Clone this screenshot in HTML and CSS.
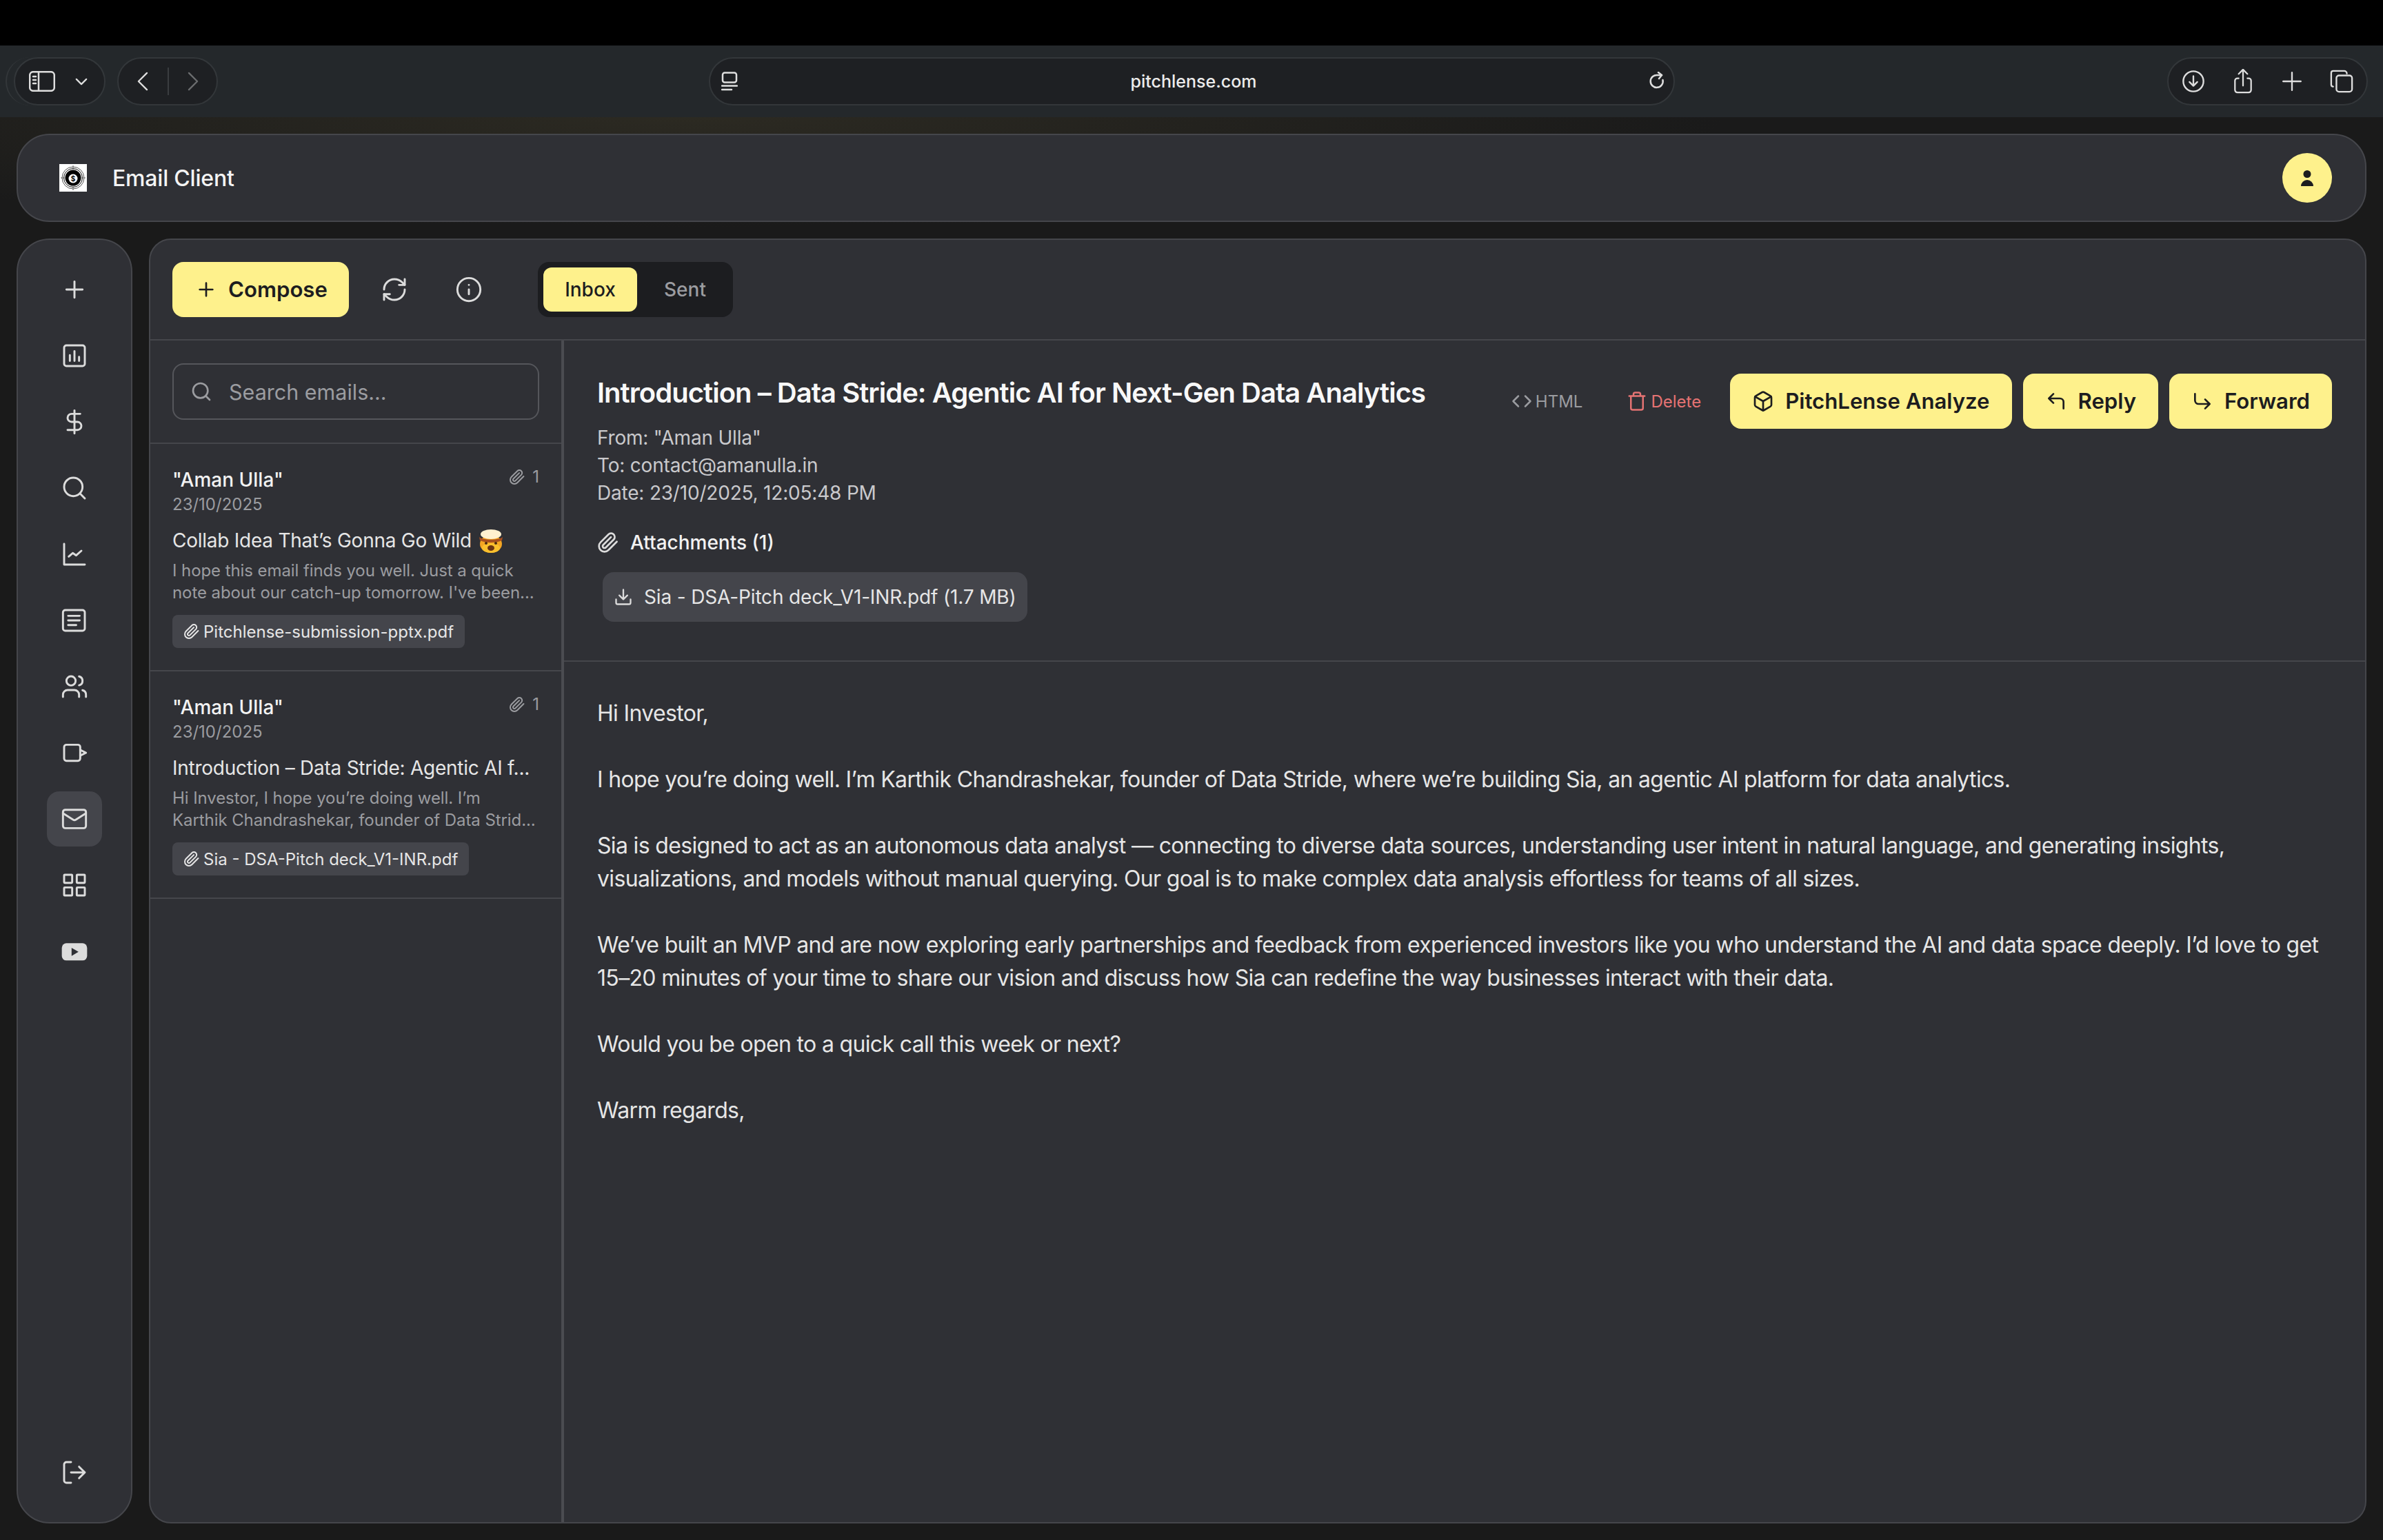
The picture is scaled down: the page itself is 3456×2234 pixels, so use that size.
FILE: index.html
```html
<!DOCTYPE html>
<html lang="en">

<head>
  <meta charset="utf-8">
  <title>Email Client</title>
  <link rel="stylesheet" href="styles.css">
</head>

<body>
  <div class="bezel"></div>

  <div class="chrome">
    <div class="pill pill-side">
      <svg class="ic-side" viewBox="0 0 38 30"><rect x="1.2" y="1.2" width="35.600" height="27.600" rx="5"/><path d="M14 1.500v27M6 8h4M6 13h4M6 18h4"/></svg>
      <svg class="ic-chev" viewBox="0 0 20 12"><path d="M2 2l8 8 8-8"/></svg>
    </div>
    <div class="pill pill-nav">
      <svg class="ic-arrow" viewBox="0 0 18 30"><path d="M16 2L3 15l13 13"/></svg>
      <span class="nav-sep"></span>
      <svg class="ic-arrow dim" viewBox="0 0 18 30"><path d="M2 2l13 13L2 28"/></svg>
    </div>
    <div class="pill pill-url">
      <svg class="ic-page" viewBox="0 0 24 28"><rect x="2" y="1.500" width="20" height="14" rx="3"/><path d="M1 20.500h22M1 26h14"/></svg>
      <span class="url">pitchlense.com</span>
      <svg class="ic-reload" viewBox="0 0 24 28"><path d="M19.500 12a9 9 0 1 1-7.500-7h6"/><path d="M13 1l5 4-4 5"/></svg>
    </div>
    <div class="pill pill-tools">
      <svg class="ic-tool" viewBox="0 0 36 36"><circle cx="18" cy="18" r="15.500"/><path d="M18 10v15M12 19l6 6 6-6"/></svg>
      <svg class="ic-tool" viewBox="0 0 36 40"><path d="M11 15H9a4 4 0 0 0-4 4v15a4 4 0 0 0 4 4h18a4 4 0 0 0 4-4V19a4 4 0 0 0-4-4h-2"/><path d="M18 27V2M11 8l7-7 7 7"/></svg>
      <svg class="ic-tool" viewBox="0 0 36 36"><path d="M4.500 18h27M18 4.500v27"/></svg>
      <svg class="ic-tool" viewBox="0 0 36 36"><path d="M5 26a3 3 0 0 1-3-3V5a3 3 0 0 1 3-3h17a4 4 0 0 1 4 4"/><rect x="10" y="9" width="24" height="25" rx="4"/></svg>
    </div>
  </div>

  <div class="app">
    <header class="topbar">
      <div class="brand">
        <svg class="logo" viewBox="0 0 40 40">
          <rect width="40" height="40" fill="#fff"/>
          <circle cx="20" cy="20" r="16" fill="none" stroke="#555" stroke-width="1"/>
          <circle cx="20" cy="20" r="13.500" fill="none" stroke="#111" stroke-width="1"/>
          <circle cx="20" cy="20" r="11.500" fill="#000"/>
          <circle cx="20" cy="21" r="6.500" fill="#fff"/>
          <path d="M20 2v6M20 32v6M2 20h6M32 20h6" stroke="#666" stroke-width="1"/>
          <text x="20" y="25" class="logo-sign">$</text>
        </svg>
        <span class="brand-name">Email Client</span>
      </div>
      <div class="avatar">
        <svg viewBox="0 0 24 24"><circle cx="12" cy="6.500" r="5.500"/><path d="M3 24a9 9 0 0 1 18 0z"/></svg>
      </div>
    </header>

    <div class="workspace">
      <aside class="sidebar">
        <nav class="side-nav">
          <a class="side-link"><svg class="ico" viewBox="0 0 24 24"><path d="M5 12h14M12 5v14"/></svg></a>
          <a class="side-link"><svg class="ico" viewBox="0 0 24 24"><rect x="3" y="3" width="18" height="18" rx="2"/><path d="M8 16.500v-5M12 16.500V8M16 16.500v-3.500"/></svg></a>
          <a class="side-link"><svg class="ico" viewBox="0 0 24 24"><path d="M12 2v20M17 5H9.500a3.500 3.500 0 0 0 0 7h5a3.500 3.500 0 0 1 0 7H6"/></svg></a>
          <a class="side-link"><svg class="ico" viewBox="0 0 24 24"><circle cx="11" cy="11" r="8"/><path d="M21 21l-4.300-4.300"/></svg></a>
          <a class="side-link"><svg class="ico" viewBox="0 0 24 24"><path d="M3 3v18h18"/><path d="M7 14l3.500-3 3 2 4.500-4"/></svg></a>
          <a class="side-link"><svg class="ico" viewBox="0 0 24 24"><rect x="2" y="3" width="19" height="18" rx="2"/><path d="M6.500 8h10M6.500 12h10M6.500 16h7"/></svg></a>
          <a class="side-link"><svg class="ico" viewBox="0 0 24 24"><path d="M16 21v-2a4 4 0 0 0-4-4H6a4 4 0 0 0-4 4v2"/><circle cx="9" cy="7" r="4"/><path d="M22 21v-2a4 4 0 0 0-3-3.870M16 3.130a4 4 0 0 1 0 7.750"/></svg></a>
          <a class="side-link"><svg class="ico" viewBox="0 0 24 24"><rect x="3" y="5" width="14" height="14" rx="2"/><path d="M17 9.500l5 2.500-5 2.500"/></svg></a>
          <a class="side-link active"><svg class="ico" viewBox="0 0 24 24"><rect x="2" y="4" width="20" height="16" rx="2"/><path d="M22 7l-8.970 5.700a1.940 1.940 0 0 1-2.060 0L2 7"/></svg></a>
          <a class="side-link"><svg class="ico" viewBox="0 0 24 24"><rect x="3" y="3" width="7" height="7" rx="0.500"/><rect x="14" y="3" width="7" height="7" rx="0.500"/><rect x="14" y="14" width="7" height="7" rx="0.500"/><rect x="3" y="14" width="7" height="7" rx="0.500"/></svg></a>
          <a class="side-link"><svg class="ico" viewBox="0 0 24 24"><rect class="solid" x="1" y="5" width="22" height="15" rx="4"/><path class="cut" d="M9.500 9l6 3.500-6 3.500z"/></svg></a>
        </nav>
        <a class="side-link"><svg class="ico" viewBox="0 0 24 24"><path d="M9 21H5a2 2 0 0 1-2-2V5a2 2 0 0 1 2-2h4"/><path d="M16 17l5-5-5-5M21 12H9"/></svg></a>
      </aside>

      <main class="mail">
        <div class="mail-toolbar">
          <button class="btn btn-compose"><svg class="ico ico-sm" viewBox="0 0 24 24"><path d="M5 12h14M12 5v14"/></svg>Compose</button>
          <span class="tool-ico tool-first"><svg class="ico" viewBox="0 0 24 24"><path d="M3 12a9 9 0 0 1 9-9 9.750 9.750 0 0 1 6.740 2.740L21 8"/><path d="M21 3v5h-5"/><path d="M21 12a9 9 0 0 1-9 9 9.750 9.750 0 0 1-6.740-2.740L3 16"/><path d="M8 16H3v5"/></svg></span>
          <span class="tool-ico"><svg class="ico" viewBox="0 0 24 24"><circle cx="12" cy="12" r="10"/><path d="M12 16v-4M12 8h.01"/></svg></span>
          <div class="tabs">
            <span class="tab on">Inbox</span>
            <span class="tab tab-sent">Sent</span>
          </div>
        </div>

        <div class="mail-body">
          <section class="list">
            <div class="search-wrap">
              <label class="search">
                <svg class="ico ico-search" viewBox="0 0 24 24"><circle cx="11" cy="11" r="8"/><path d="M21 21l-4.300-4.300"/></svg>
                <input class="search-input" type="text" placeholder="Search emails...">
              </label>
            </div>

            <article class="item">
              <div class="item-top">
                <div>
                  <div class="item-from">"Aman Ulla"</div>
                  <div class="item-date">23/10/2025</div>
                </div>
                <span class="item-count"><svg class="clip" viewBox="0 0 24 24"><path d="M21.440 11.050l-9.190 9.190a6 6 0 0 1-8.490-8.490l8.570-8.570A4 4 0 1 1 18 8.840l-8.590 8.570a2 2 0 0 1-2.830-2.830l8.490-8.480"/></svg>1</span>
              </div>
              <div class="item-subject">Collab Idea That’s Gonna Go Wild
                <svg class="emoji" viewBox="0 0 36 36">
                  <ellipse cx="18" cy="23" rx="16" ry="13" fill="#f5a623"/>
                  <ellipse cx="18" cy="29" rx="13" ry="7" fill="#fbc02d"/>
                  <ellipse cx="18" cy="9" rx="15" ry="7" fill="#fff0cf"/>
                  <path d="M1 13c6 5 28 5 34 0l-1 5c-8 4-24 4-32 0z" fill="#a9501f"/>
                  <circle cx="11" cy="22" r="2" fill="#4a2a12"/>
                  <circle cx="25" cy="22" r="2" fill="#4a2a12"/>
                  <ellipse cx="18" cy="29" rx="5" ry="4" fill="#6b3412"/>
                </svg>
              </div>
              <p class="item-preview">I hope this email finds you well. Just a quick note about our catch-up tomorrow. I've been...</p>
              <span class="chip"><svg class="clip" viewBox="0 0 24 24"><path d="M21.440 11.050l-9.190 9.190a6 6 0 0 1-8.490-8.490l8.570-8.570A4 4 0 1 1 18 8.840l-8.590 8.570a2 2 0 0 1-2.830-2.830l8.490-8.480"/></svg>Pitchlense-submission-pptx.pdf</span>
            </article>

            <article class="item">
              <div class="item-top">
                <div>
                  <div class="item-from">"Aman Ulla"</div>
                  <div class="item-date">23/10/2025</div>
                </div>
                <span class="item-count"><svg class="clip" viewBox="0 0 24 24"><path d="M21.440 11.050l-9.190 9.190a6 6 0 0 1-8.490-8.490l8.570-8.570A4 4 0 1 1 18 8.840l-8.590 8.570a2 2 0 0 1-2.830-2.830l8.490-8.480"/></svg>1</span>
              </div>
              <div class="item-subject">Introduction – Data Stride: Agentic AI f...</div>
              <p class="item-preview">Hi Investor, I hope you’re doing well. I’m Karthik Chandrashekar, founder of Data Strid...</p>
              <span class="chip"><svg class="clip" viewBox="0 0 24 24"><path d="M21.440 11.050l-9.190 9.190a6 6 0 0 1-8.490-8.490l8.570-8.570A4 4 0 1 1 18 8.840l-8.590 8.570a2 2 0 0 1-2.830-2.830l8.490-8.480"/></svg>Sia - DSA-Pitch deck_V1-INR.pdf</span>
            </article>
          </section>

          <section class="detail">
            <div class="detail-head">
              <div class="head-left">
                <h1 class="detail-title">Introduction – Data Stride: Agentic AI for Next-Gen Data Analytics</h1>
                <div class="meta">
                  <div>From: "Aman Ulla"</div>
                  <div>To: contact@amanulla.in</div>
                  <div>Date: 23/10/2025, 12:05:48 PM</div>
                </div>
                <div class="attach-title"><svg class="ico ico-sm" viewBox="0 0 24 24"><path d="M21.440 11.050l-9.190 9.190a6 6 0 0 1-8.490-8.490l8.570-8.570A4 4 0 1 1 18 8.840l-8.590 8.570a2 2 0 0 1-2.830-2.830l8.490-8.480"/></svg>Attachments (1)</div>
                <a class="attach-file"><svg class="ico ico-xs" viewBox="0 0 24 24"><path d="M21 15v4a2 2 0 0 1-2 2H5a2 2 0 0 1-2-2v-4M7 10l5 5 5-5M12 15V3"/></svg>Sia - DSA-Pitch deck_V1-INR.pdf (1.7 MB)</a>
              </div>
              <div class="actions">
                <a class="link-btn link-html"><svg class="ico ico-xs" viewBox="0 0 24 24"><path d="M16 18l6-6-6-6M8 6l-6 6 6 6"/></svg>HTML</a>
                <a class="link-btn link-delete"><svg class="ico ico-xs" viewBox="0 0 24 24"><path d="M3 6h18M19 6v14a2 2 0 0 1-2 2H7a2 2 0 0 1-2-2V6M8 6V4a2 2 0 0 1 2-2h4a2 2 0 0 1 2 2v2"/></svg>Delete</a>
                <button class="btn"><svg class="ico ico-sm" viewBox="0 0 24 24"><path d="M21 16V8a2 2 0 0 0-1-1.730l-7-4a2 2 0 0 0-2 0l-7 4A2 2 0 0 0 3 8v8a2 2 0 0 0 1 1.730l7 4a2 2 0 0 0 2 0l7-4A2 2 0 0 0 21 16z"/><path d="M3.270 6.960L12 12.010l8.730-5.050M12 22.080V12"/></svg>PitchLense Analyze</button>
                <button class="btn"><svg class="ico ico-sm" viewBox="0 0 24 24"><path d="M9 14L4 9l5-5M20 20v-7a4 4 0 0 0-4-4H4"/></svg>Reply</button>
                <button class="btn"><svg class="ico ico-sm" viewBox="0 0 24 24"><path d="M15 10l5 5-5 5M4 4v7a4 4 0 0 0 4 4h12"/></svg>Forward</button>
              </div>
            </div>
            <div class="detail-text">
              <p>Hi Investor,</p>
              <p>I hope you’re doing well. I’m Karthik Chandrashekar, founder of Data Stride, where we’re building Sia, an agentic AI platform for data analytics.</p>
              <p>Sia is designed to act as an autonomous data analyst — connecting to diverse data sources, understanding user intent in natural language, and generating insights, visualizations, and models without manual querying. Our goal is to make complex data analysis effortless for teams of all sizes.</p>
              <p>We’ve built an MVP and are now exploring early partnerships and feedback from experienced investors like you who understand the AI and data space deeply. I’d love to get 15–20 minutes of your time to share our vision and discuss how Sia can redefine the way businesses interact with their data.</p>
              <p>Would you be open to a quick call this week or next?</p>
              <p>Warm regards,</p>
            </div>
          </section>
        </div>
      </main>
    </div>
  </div>
</body>

</html>
```

FILE: styles.css
```css
* {
  box-sizing: border-box;
}

body {
  margin: 0;
  height: 2234px;
  overflow: hidden;
  background-color: #1a1a1a;
  color: #e6e6e6;
  font-family: Inter, "Noto Sans", sans-serif;
}

svg {
  display: block;
  flex: none;
}

/* safari window */
.bezel {
  height: 66px;
  background-color: #000;
}

.chrome {
  height: 104px;
  padding: 17px 22px 0 20px;
  display: flex;
  align-items: flex-start;
  gap: 17px;
  background-color: #24282b;
}

.pill {
  height: 70px;
  display: flex;
  align-items: center;
  border: 2px solid #33373a;
  border-radius: 35px;
  background-color: #1e2023;
}

.chrome svg {
  fill: none;
  stroke: #dedede;
  stroke-width: 2.500;
  stroke-linecap: round;
  stroke-linejoin: round;
}

.pill-side {
  position: relative;
  width: 133px;
  padding-left: 20px;
}

.pill-side::before {
  content: "";
  position: absolute;
  left: -14px;
  top: -2px;
  width: 40px;
  height: 70px;
  border-left: 2px solid #33373a;
  border-radius: 35px 0 0 35px;
}

.ic-side {
  width: 38px;
  height: 30px;
}

.ic-chev {
  width: 18px;
  height: 11px;
  margin-left: 29px;
}

.pill-nav {
  width: 146px;
  padding-left: 26px;
}

.ic-arrow {
  width: 17px;
  height: 28px;
}

.ic-arrow.dim {
  stroke: #6b6d6f;
}

.nav-sep {
  width: 2px;
  height: 40px;
  margin: 0 27px 0 28px;
  background-color: #3a3d40;
}

.pill-url {
  width: 1401px;
  margin-left: 695px;
  padding: 0 11px 0 16px;
  justify-content: space-between;
}

.ic-page {
  width: 24px;
  height: 28px;
}

.ic-reload {
  width: 24px;
  height: 28px;
}

.url {
  font-size: 25px;
  font-weight: 500;
  color: #ececec;
}

.pill-tools {
  width: 291px;
  margin-left: auto;
  padding: 0 19px;
  justify-content: space-between;
}

.ic-tool {
  width: 34px;
  height: 36px;
}

/* page */
.app {
  height: 2064px;
  padding: 24px;
  display: flex;
  flex-direction: column;
  gap: 24px;
  background-image: radial-gradient(ellipse 1500px 160px at 1000px 0, #2c2a22, transparent);
}

.topbar {
  height: 128px;
  padding: 0 48px 0 60px;
  display: flex;
  align-items: center;
  justify-content: space-between;
  background-color: #2f3035;
  border: 2px solid #45464b;
  border-radius: 48px;
}

.brand {
  display: flex;
  align-items: center;
  gap: 37px;
}

.logo {
  width: 40px;
  height: 40px;
}

.logo-sign {
  font-size: 10px;
  font-weight: 700;
  text-anchor: middle;
  fill: #000;
}

.brand-name {
  font-size: 32px;
  font-weight: 500;
  letter-spacing: -0.2px;
  color: #f4f4f4;
}

.avatar {
  width: 72px;
  height: 72px;
  border-radius: 50%;
  background-color: #fef18c;
  display: flex;
  align-items: center;
  justify-content: center;
}

.avatar svg {
  width: 24px;
  height: 24px;
  fill: #1d1d1f;
}

.workspace {
  flex: 1;
  display: flex;
  gap: 24px;
  min-height: 0;
}

/* icons */
.ico {
  width: 40px;
  height: 40px;
  fill: none;
  stroke: #dcdcdc;
  stroke-width: 1.750;
  stroke-linecap: round;
  stroke-linejoin: round;
}

.ico .solid {
  fill: #dcdcdc;
  stroke: none;
}

.ico .cut {
  fill: #2f3035;
  stroke: none;
}

.ico-sm {
  width: 32px;
  height: 32px;
  stroke-width: 2;
}

.ico-xs {
  width: 28px;
  height: 28px;
  stroke-width: 2;
}

/* sidebar */
.sidebar {
  width: 168px;
  padding: 32px 0;
  display: flex;
  flex-direction: column;
  align-items: center;
  justify-content: space-between;
  background-color: #2f3035;
  border: 2px solid #45464b;
  border-radius: 48px;
}

.side-nav {
  display: flex;
  flex-direction: column;
  gap: 16px;
}

.side-link {
  width: 80px;
  height: 80px;
  border-radius: 18px;
  display: flex;
  align-items: center;
  justify-content: center;
}

.side-link.active {
  background-color: #44454b;
}

/* mail panel */
.mail {
  flex: 1;
  min-width: 0;
  display: flex;
  flex-direction: column;
  background-color: #2f3035;
  border: 2px solid #45464b;
  border-radius: 32px;
  overflow: hidden;
}

.mail-toolbar {
  height: 146px;
  padding: 32px 32px 0;
  display: flex;
  align-items: flex-start;
  border-bottom: 2px solid #45464b;
}

.btn {
  height: 80px;
  padding: 0 32px;
  display: inline-flex;
  align-items: center;
  gap: 16px;
  border: 0;
  border-radius: 16px;
  background-color: #fef18c;
  color: #1d1d1f;
  font-family: inherit;
  font-size: 31.150px;
  font-weight: 600;
}

.btn .ico {
  stroke: #1d1d1f;
}

.btn-compose {
  width: 256px;
  padding: 0 0 0 33px;
}

.tool-ico {
  height: 80px;
  display: flex;
  align-items: center;
}

.tool-first {
  margin-left: 46px;
  margin-right: 68px;
}

.tabs {
  height: 80px;
  margin-left: 80px;
  padding: 8px;
  display: flex;
  border-radius: 16px;
  background-color: #1c1d20;
}

.tab {
  width: 136px;
  display: flex;
  align-items: center;
  justify-content: center;
  font-size: 28px;
  font-weight: 500;
  color: #9b9ca0;
}

.tab-sent {
  width: 131px;
  padding-left: 8px;
}

.tab.on {
  border-radius: 12px;
  background-color: #fef18c;
  color: #1d1d1f;
}

.mail-body {
  flex: 1;
  display: flex;
  min-height: 0;
}

.list {
  width: 600px;
  flex: none;
  border-right: 4px solid #4b4c51;
}

.search-wrap {
  padding: 33px 32px;
  border-bottom: 2px solid #45464b;
}

.search {
  height: 82px;
  padding: 0 24px;
  display: flex;
  align-items: center;
  gap: 24px;
  border: 2px solid #55565b;
  border-radius: 16px;
}

.ico-search {
  width: 32px;
  height: 32px;
  stroke: #9b9ca0;
  stroke-width: 2;
}

.search-input {
  flex: 1;
  min-width: 0;
  border: 0;
  outline: 0;
  padding: 0;
  background: none;
  font-family: inherit;
  font-size: 30.500px;
  color: #e6e6e6;
}

.search-input::placeholder {
  color: #9b9ca0;
  opacity: 1;
}

.item {
  padding: 32px;
  border-bottom: 2px solid #45464b;
}

.item-top {
  display: flex;
  justify-content: space-between;
  align-items: flex-start;
}

.item-from {
  font-size: 28px;
  line-height: 40px;
  font-weight: 500;
  color: #f2f2f2;
}

.item-date {
  font-size: 24px;
  line-height: 32px;
  color: #9b9ca0;
}

.item-count {
  display: flex;
  align-items: center;
  gap: 10px;
  font-size: 24px;
  line-height: 32px;
  color: #9b9ca0;
}

.clip {
  width: 24px;
  height: 24px;
  fill: none;
  stroke: currentColor;
  stroke-width: 2;
  stroke-linecap: round;
  stroke-linejoin: round;
}

.item-subject {
  margin-top: 16px;
  height: 40px;
  display: flex;
  align-items: center;
  gap: 10px;
  font-size: 28px;
  line-height: 40px;
  letter-spacing: -0.25px;
  color: #e6e6e6;
  white-space: nowrap;
}

.emoji {
  width: 36px;
  height: 36px;
}

.item-preview {
  margin: 8px 0 16px;
  font-size: 24px;
  line-height: 32px;
  letter-spacing: -0.08px;
  color: #9b9ca0;
}

.chip {
  height: 48px;
  width: fit-content;
  padding: 0 16px;
  display: flex;
  align-items: center;
  gap: 5px;
  border-radius: 8px;
  background-color: #44454b;
  font-size: 24px;
  color: #e6e6e6;
}

.detail {
  flex: 1;
  min-width: 0;
}

.detail-head {
  height: 466px;
  padding: 48px 48px 0;
  display: flex;
  justify-content: space-between;
  align-items: flex-start;
  border-bottom: 2px solid #45464b;
}

.detail-title {
  margin: 0;
  font-size: 40px;
  line-height: 56px;
  font-weight: 600;
  letter-spacing: -0.97px;
  color: #f8f8f8;
}

.actions {
  display: flex;
  align-items: center;
  gap: 16px;
}

.link-btn {
  display: flex;
  align-items: center;
  gap: 5px;
  font-size: 24px;
}

.link-btn .ico {
  width: 30px;
  height: 30px;
}

.link-html {
  margin-right: 48px;
  color: #9b9ca0;
}

.link-html .ico {
  stroke: #9b9ca0;
}

.link-delete {
  margin-right: 26px;
  color: #e57373;
}

.link-delete .ico {
  stroke: #e57373;
}

.meta {
  margin-top: 17px;
  font-size: 28px;
  line-height: 40px;
  letter-spacing: -0.2px;
  color: #c9c9cc;
}

.attach-title {
  margin-top: 32px;
  height: 40px;
  display: flex;
  align-items: center;
  gap: 16px;
  font-size: 28px;
  font-weight: 500;
  color: #f2f2f2;
}

.attach-file {
  margin: 23px 0 0 8px;
  height: 72px;
  width: fit-content;
  padding: 0 16px;
  display: flex;
  align-items: center;
  gap: 16px;
  border-radius: 16px;
  background-color: #44454b;
  font-size: 28px;
  letter-spacing: -0.15px;
  color: #e6e6e6;
}

.detail-text {
  padding: 51px 48px 0;
  font-size: 32px;
  line-height: 48px;
  letter-spacing: -0.66px;
  color: #e6e6e6;
}

.detail-text p {
  margin: 0 0 48px;
}
```
